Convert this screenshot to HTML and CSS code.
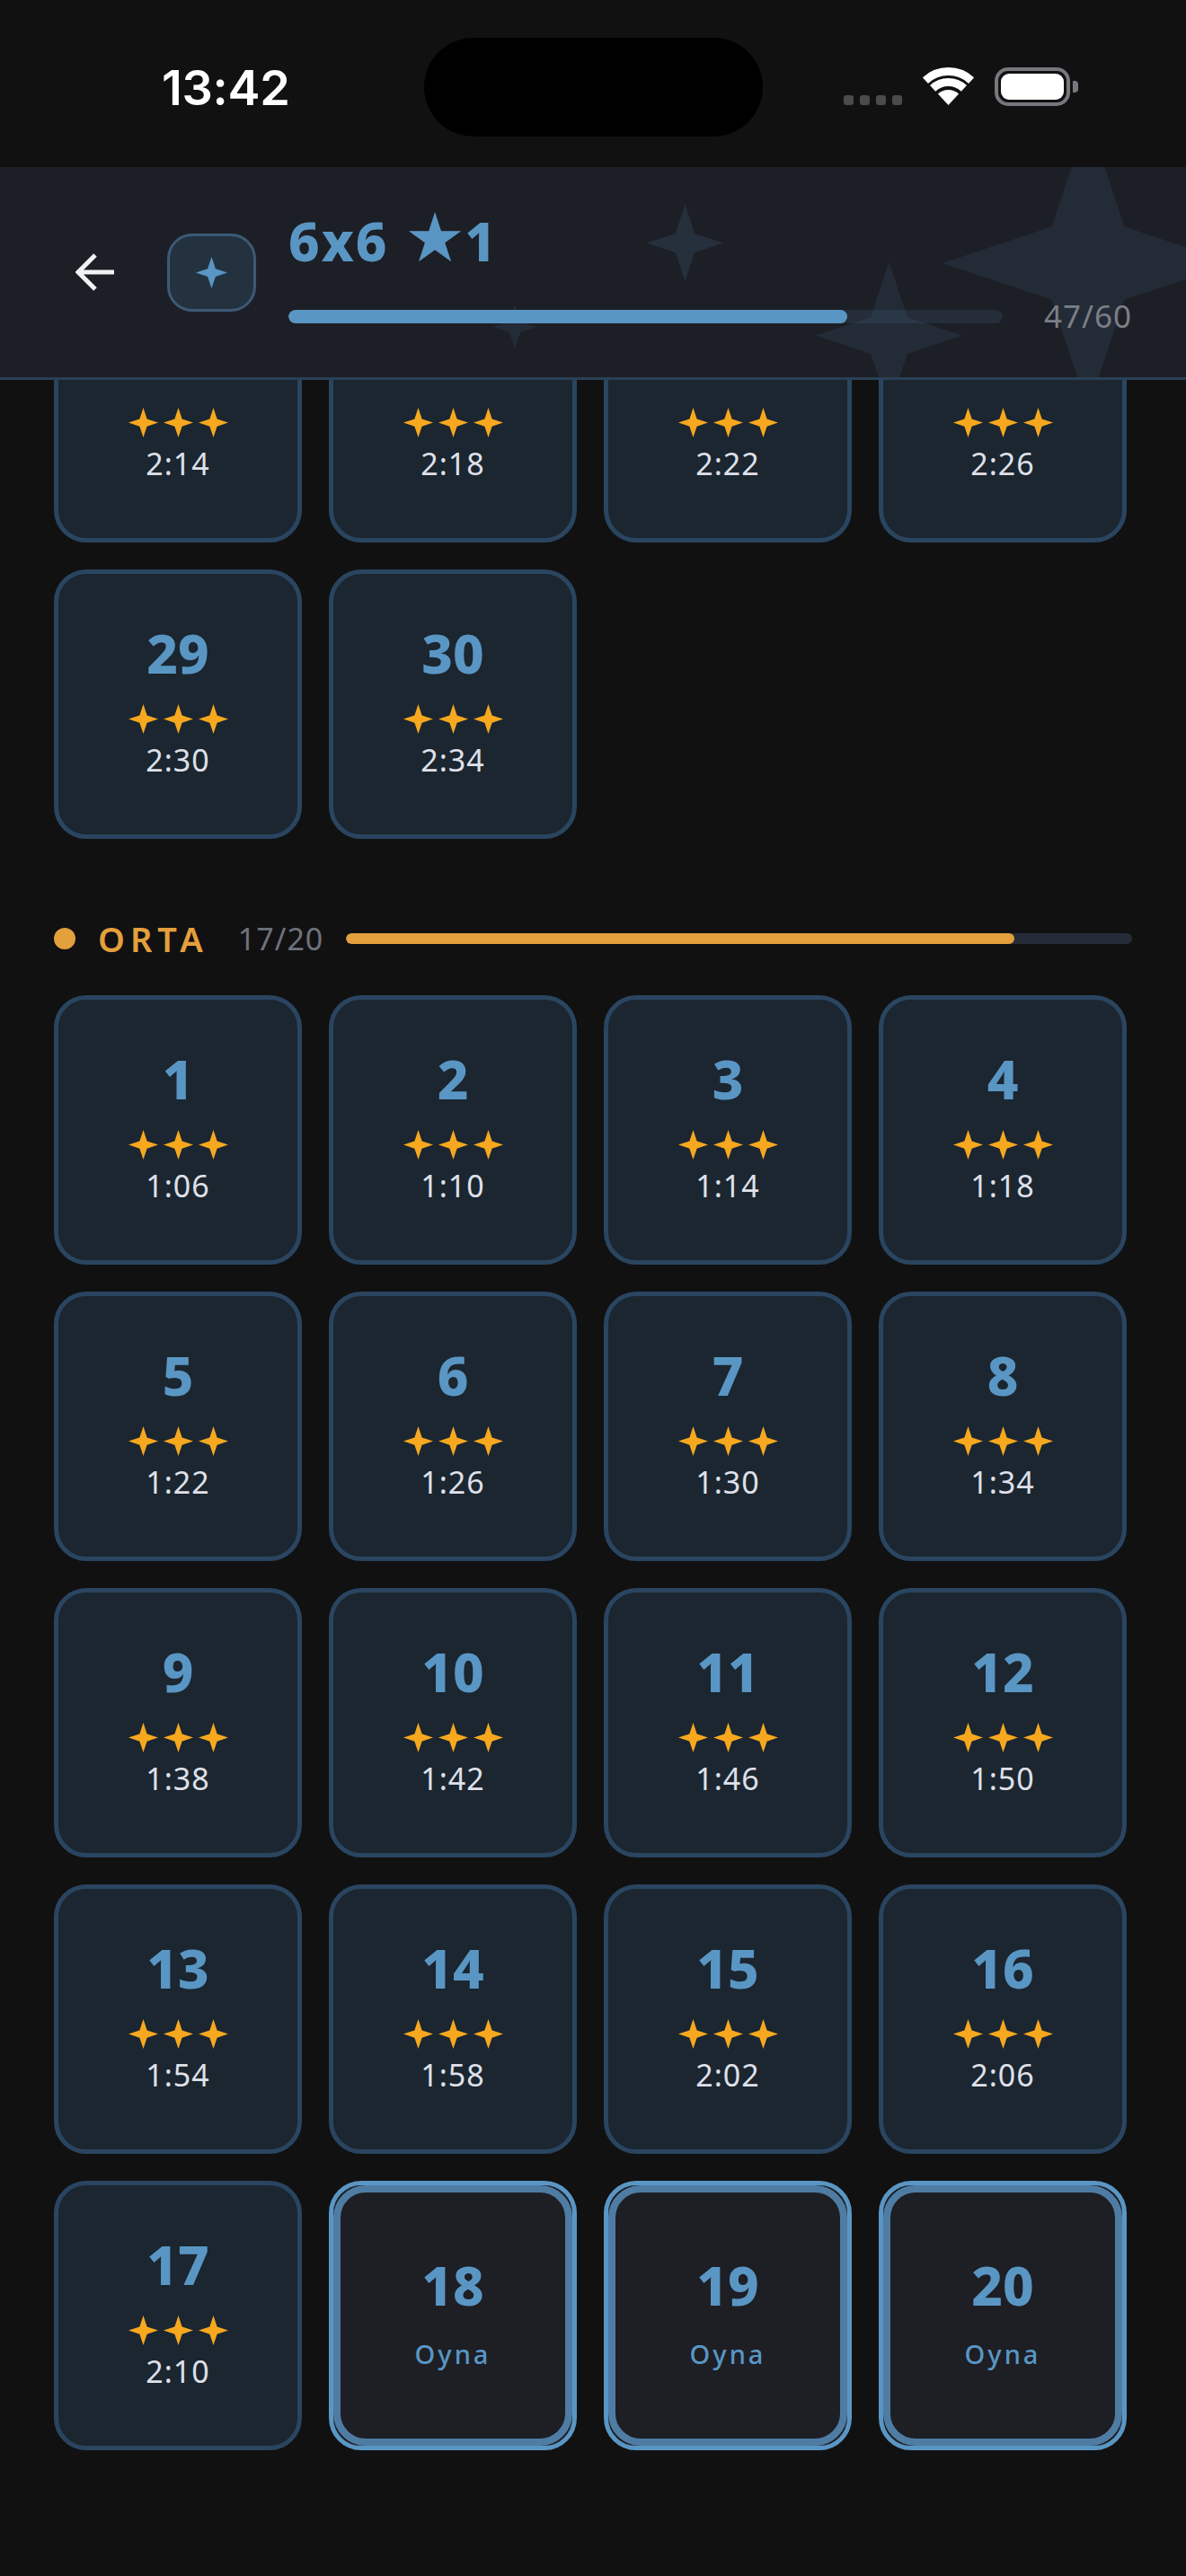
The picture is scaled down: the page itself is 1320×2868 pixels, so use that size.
FILE: index.html
```html
<!DOCTYPE html>
<html lang="tr">
<head>
    <meta charset="UTF-8">
    <meta name="viewport" content="width=device-width, initial-scale=1.0">
    <title>6x6 / seviyeler</title>
    <link rel="stylesheet" href="styles.css">
</head>
<body>
    <svg class="defs" width="0" height="0">
        <symbol id="sparkle" viewBox="0 0 24 24">
            <path d="M12 0 L15 9 L24 12 L15 15 L12 24 L9 15 L0 12 L9 9 Z"/>
        </symbol>
    </svg>

    <div class="phone">
        <div class="status-bar">
            <span class="clock">13:42</span>
            <div class="notch"></div>
            <div class="status-icons">
                <div class="signal"><i></i><i></i><i></i><i></i></div>
                <svg class="wifi" width="57" height="42" viewBox="0 0 57 42">
                    <path d="M2.9 14.6 A37.5 37.5 0 0 1 54.1 14.6" fill="none" stroke="#fff" stroke-width="9"/>
                    <path d="M11.1 23.4 A25.5 25.5 0 0 1 45.9 23.4" fill="none" stroke="#fff" stroke-width="9"/>
                    <path d="M28.5 42 L16.9 29.6 A17 17 0 0 1 40.1 29.6 Z" fill="#fff"/>
                </svg>
                <div class="battery"><div class="battery-fill"></div><div class="battery-cap"></div></div>
            </div>
        </div>

        <header class="top-bar">
            <svg class="deco deco-a"><use href="#sparkle"/></svg>
            <svg class="deco deco-b"><use href="#sparkle"/></svg>
            <svg class="deco deco-c"><use href="#sparkle"/></svg>
            <svg class="deco deco-d"><use href="#sparkle"/></svg>

            <svg class="back" width="43" height="42" viewBox="0 0 43 42">
                <path d="M43 21 H4 M22 2 L3 21 L22 40" fill="none" stroke="#f2f2f4" stroke-width="5"/>
            </svg>
            <div class="pack-icon"><svg class="pack-star"><use href="#sparkle"/></svg></div>
            <div class="top-main">
                <div class="title">6x6 <span class="title-star">★</span>1</div>
                <div class="top-progress">
                    <div class="top-track"><div class="top-fill" style="width: 78.3%"></div></div>
                    <span class="top-count">47/60</span>
                </div>
            </div>
        </header>

        <main class="scroll">
            <div class="scroll-inner">
                <div class="grid">
                    <div class="card"><div class="num">25</div><div class="stars"><svg><use href="#sparkle"/></svg><svg><use href="#sparkle"/></svg><svg><use href="#sparkle"/></svg></div><div class="time">2:14</div></div>
                    <div class="card"><div class="num">26</div><div class="stars"><svg><use href="#sparkle"/></svg><svg><use href="#sparkle"/></svg><svg><use href="#sparkle"/></svg></div><div class="time">2:18</div></div>
                    <div class="card"><div class="num">27</div><div class="stars"><svg><use href="#sparkle"/></svg><svg><use href="#sparkle"/></svg><svg><use href="#sparkle"/></svg></div><div class="time">2:22</div></div>
                    <div class="card"><div class="num">28</div><div class="stars"><svg><use href="#sparkle"/></svg><svg><use href="#sparkle"/></svg><svg><use href="#sparkle"/></svg></div><div class="time">2:26</div></div>
                    <div class="card"><div class="num">29</div><div class="stars"><svg><use href="#sparkle"/></svg><svg><use href="#sparkle"/></svg><svg><use href="#sparkle"/></svg></div><div class="time">2:30</div></div>
                    <div class="card"><div class="num">30</div><div class="stars"><svg><use href="#sparkle"/></svg><svg><use href="#sparkle"/></svg><svg><use href="#sparkle"/></svg></div><div class="time">2:34</div></div>
                </div>

                <div class="section-head">
                    <span class="dot"></span>
                    <span class="section-name">ORTA</span>
                    <span class="section-count">17/20</span>
                    <div class="section-track"><div class="section-fill" style="width: 85%"></div></div>
                </div>

                <div class="grid">
                    <div class="card"><div class="num">1</div><div class="stars"><svg><use href="#sparkle"/></svg><svg><use href="#sparkle"/></svg><svg><use href="#sparkle"/></svg></div><div class="time">1:06</div></div>
                    <div class="card"><div class="num">2</div><div class="stars"><svg><use href="#sparkle"/></svg><svg><use href="#sparkle"/></svg><svg><use href="#sparkle"/></svg></div><div class="time">1:10</div></div>
                    <div class="card"><div class="num">3</div><div class="stars"><svg><use href="#sparkle"/></svg><svg><use href="#sparkle"/></svg><svg><use href="#sparkle"/></svg></div><div class="time">1:14</div></div>
                    <div class="card"><div class="num">4</div><div class="stars"><svg><use href="#sparkle"/></svg><svg><use href="#sparkle"/></svg><svg><use href="#sparkle"/></svg></div><div class="time">1:18</div></div>
                    <div class="card"><div class="num">5</div><div class="stars"><svg><use href="#sparkle"/></svg><svg><use href="#sparkle"/></svg><svg><use href="#sparkle"/></svg></div><div class="time">1:22</div></div>
                    <div class="card"><div class="num">6</div><div class="stars"><svg><use href="#sparkle"/></svg><svg><use href="#sparkle"/></svg><svg><use href="#sparkle"/></svg></div><div class="time">1:26</div></div>
                    <div class="card"><div class="num">7</div><div class="stars"><svg><use href="#sparkle"/></svg><svg><use href="#sparkle"/></svg><svg><use href="#sparkle"/></svg></div><div class="time">1:30</div></div>
                    <div class="card"><div class="num">8</div><div class="stars"><svg><use href="#sparkle"/></svg><svg><use href="#sparkle"/></svg><svg><use href="#sparkle"/></svg></div><div class="time">1:34</div></div>
                    <div class="card"><div class="num">9</div><div class="stars"><svg><use href="#sparkle"/></svg><svg><use href="#sparkle"/></svg><svg><use href="#sparkle"/></svg></div><div class="time">1:38</div></div>
                    <div class="card"><div class="num">10</div><div class="stars"><svg><use href="#sparkle"/></svg><svg><use href="#sparkle"/></svg><svg><use href="#sparkle"/></svg></div><div class="time">1:42</div></div>
                    <div class="card"><div class="num">11</div><div class="stars"><svg><use href="#sparkle"/></svg><svg><use href="#sparkle"/></svg><svg><use href="#sparkle"/></svg></div><div class="time">1:46</div></div>
                    <div class="card"><div class="num">12</div><div class="stars"><svg><use href="#sparkle"/></svg><svg><use href="#sparkle"/></svg><svg><use href="#sparkle"/></svg></div><div class="time">1:50</div></div>
                    <div class="card"><div class="num">13</div><div class="stars"><svg><use href="#sparkle"/></svg><svg><use href="#sparkle"/></svg><svg><use href="#sparkle"/></svg></div><div class="time">1:54</div></div>
                    <div class="card"><div class="num">14</div><div class="stars"><svg><use href="#sparkle"/></svg><svg><use href="#sparkle"/></svg><svg><use href="#sparkle"/></svg></div><div class="time">1:58</div></div>
                    <div class="card"><div class="num">15</div><div class="stars"><svg><use href="#sparkle"/></svg><svg><use href="#sparkle"/></svg><svg><use href="#sparkle"/></svg></div><div class="time">2:02</div></div>
                    <div class="card"><div class="num">16</div><div class="stars"><svg><use href="#sparkle"/></svg><svg><use href="#sparkle"/></svg><svg><use href="#sparkle"/></svg></div><div class="time">2:06</div></div>
                    <div class="card"><div class="num">17</div><div class="stars"><svg><use href="#sparkle"/></svg><svg><use href="#sparkle"/></svg><svg><use href="#sparkle"/></svg></div><div class="time">2:10</div></div>
                    <div class="card card-next"><div class="num">18</div><div class="play">Oyna</div></div>
                    <div class="card card-next"><div class="num">19</div><div class="play">Oyna</div></div>
                    <div class="card card-next"><div class="num">20</div><div class="play">Oyna</div></div>
                </div>
            </div>
        </main>
    </div>
</body>
</html>
```

FILE: styles.css
```css
* {
    margin: 0;
    padding: 0;
    box-sizing: border-box;
}

body {
    background-color: #111112;
    font-family: "Noto Sans", "Open Sans", sans-serif;
    color: white;
}

.defs {
    position: absolute;
}

.phone {
    width: 1320px;
    height: 2868px;
    display: flex;
    flex-direction: column;
    overflow: hidden;
}

/* status bar */
.status-bar {
    position: relative;
    height: 186px;
    flex-shrink: 0;
    display: flex;
    justify-content: space-between;
    align-items: flex-start;
    padding: 75px 129px 0 180px;
}

.clock {
    font-family: Inter, sans-serif;
    font-size: 54px;
    font-weight: 600;
    line-height: 45px;
    letter-spacing: -0.3px;
}

.notch {
    position: absolute;
    left: 472px;
    top: 42px;
    width: 377px;
    height: 110px;
    background: black;
    border-radius: 55px;
}

.status-icons {
    display: flex;
    align-items: flex-end;
    gap: 23px;
}

.signal {
    display: flex;
    gap: 7px;
    margin-bottom: 1px;
}

.signal i {
    width: 11px;
    height: 11px;
    border-radius: 3px;
    background: #4b4b4d;
}

.wifi {
    display: block;
    margin-bottom: 1px;
}

.battery {
    position: relative;
    width: 84px;
    height: 43px;
    border: 4px solid #77777d;
    border-radius: 15px;
    padding: 3px;
}

.battery-fill {
    height: 100%;
    background: white;
    border-radius: 9px;
}

.battery-cap {
    position: absolute;
    right: -13px;
    top: 11px;
    width: 6px;
    height: 13px;
    background: #77777d;
    border-radius: 0 4px 4px 0;
}

/* top bar */
.top-bar {
    position: relative;
    height: 237px;
    flex-shrink: 0;
    display: flex;
    align-items: center;
    padding: 0 60px 0 84px;
    background: #1d1f26;
    border-bottom: 3px solid #2a4057;
    overflow: hidden;
}

.deco {
    position: absolute;
    fill: #5a96c4;
    opacity: 0.1;
}

.deco-a {
    left: 720px;
    top: 42px;
    width: 85px;
    height: 85px;
    opacity: 0.14;
}

.deco-b {
    left: 908px;
    top: 106px;
    width: 163px;
    height: 163px;
}

.deco-c {
    left: 1049px;
    top: -55px;
    width: 324px;
    height: 324px;
}

.deco-d {
    left: 549px;
    top: 154px;
    width: 48px;
    height: 48px;
}

.back {
    flex-shrink: 0;
    margin-right: 59px;
}

.pack-icon {
    width: 99px;
    height: 87px;
    flex-shrink: 0;
    margin-right: 36px;
    display: flex;
    justify-content: center;
    align-items: center;
    background: #243240;
    border: 3px solid #3c5a76;
    border-radius: 28px;
}

.pack-star {
    width: 35px;
    height: 35px;
    fill: #5a96c4;
}

.top-main {
    position: relative;
    flex: 1;
}

.title {
    font-size: 60px;
    font-weight: 800;
    line-height: 70px;
    letter-spacing: 2px;
    color: #5a96c4;
    margin-top: 2px;
    margin-bottom: 26px;
}

.title-star {
    font-family: "DejaVu Sans", sans-serif;
    font-size: 76px;
    line-height: 0;
    letter-spacing: -1px;
}

.top-progress {
    display: flex;
    align-items: center;
    gap: 46px;
}

.top-track {
    flex: 1;
    height: 15px;
    background: rgba(90, 150, 196, 0.12);
    border-radius: 8px;
    overflow: hidden;
}

.top-fill {
    height: 100%;
    background: #5a96c4;
    border-radius: 8px;
}

.top-count {
    font-size: 35px;
    line-height: 46px;
    letter-spacing: 1px;
    color: #7b7e86;
}

/* level list */
.scroll {
    flex: 1;
    overflow: hidden;
}

.scroll-inner {
    margin-top: -119px;
}

.grid {
    display: grid;
    grid-template-columns: repeat(4, 276px);
    grid-auto-rows: 300px;
    gap: 30px;
    padding-left: 60px;
}

.card {
    position: relative;
    display: flex;
    flex-direction: column;
    align-items: center;
    justify-content: center;
    padding-bottom: 7px;
    background: #1b2630;
    border: 5px solid #2a4560;
    border-radius: 36px;
}

.num {
    font-size: 60px;
    font-weight: 800;
    line-height: 70px;
    color: #5a96c4;
}

.stars {
    display: flex;
    gap: 6px;
    margin-top: 22px;
}

.stars svg {
    width: 33px;
    height: 33px;
    fill: #f7a81f;
}

.time {
    font-size: 34px;
    line-height: 46px;
    letter-spacing: 1px;
    color: #dfe0ea;
    margin-top: 6px;
}

.card-next {
    background: #1d1f25;
    border-color: #5a96c4;
}

.card-next::before {
    content: '';
    position: absolute;
    top: 0;
    left: 0;
    right: 0;
    bottom: 0;
    border: 8px solid #4f7ca3;
    border-radius: 36px;
}

.play {
    font-size: 29px;
    font-weight: 500;
    line-height: 40px;
    letter-spacing: 3px;
    color: #5a96c4;
    margin-top: 22px;
}

.section-head {
    display: flex;
    align-items: center;
    height: 40px;
    margin: 91px 0 43px;
    padding: 0 60px;
}

.dot {
    width: 24px;
    height: 24px;
    background: #e3a03c;
    border-radius: 50%;
    margin-right: 25px;
}

.section-name {
    font-size: 38px;
    font-weight: 600;
    letter-spacing: 6px;
    color: #e3a03c;
    margin-right: 33px;
}

.section-count {
    font-size: 34px;
    letter-spacing: 1px;
    color: #6f727c;
    margin-right: 25px;
}

.section-track {
    flex: 1;
    height: 12px;
    background: #252c38;
    border-radius: 6px;
    overflow: hidden;
}

.section-fill {
    height: 100%;
    background: #e3a03c;
    border-radius: 6px;
}
```
